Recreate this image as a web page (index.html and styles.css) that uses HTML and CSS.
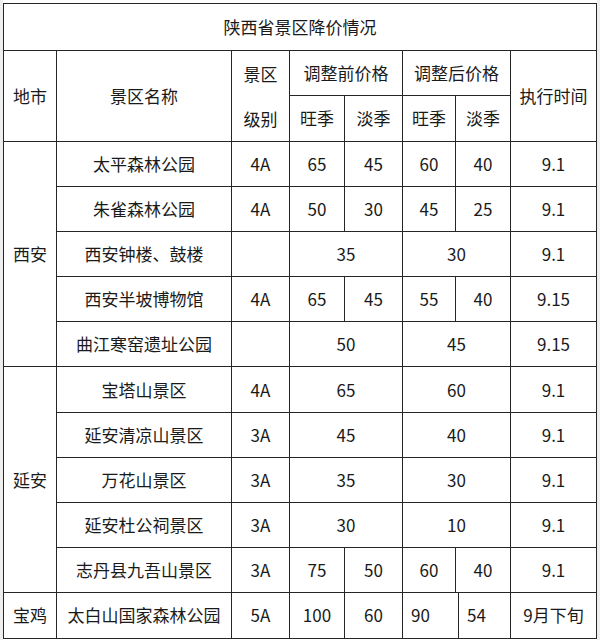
FILE: index.html
```html
<!DOCTYPE html>
<html lang="zh-CN">
<head>
<meta charset="utf-8">
<title>陕西省景区降价情况</title>
<link rel="stylesheet" href="styles.css">
</head>
<body>
<div class="sheet">
<table class="price-table">
  <colgroup>
    <col class="c-city"><col class="c-name"><col class="c-level">
    <col class="c-p1"><col class="c-p2"><col class="c-p3"><col class="c-gap"><col class="c-p4">
    <col class="c-date">
  </colgroup>
  <tr class="r-title"><td colspan="9">陕西省景区降价情况</td></tr>
  <tr class="r-head">
    <td rowspan="2">地市</td>
    <td rowspan="2">景区名称</td>
    <td rowspan="2" class="two-line">景区<br>级别</td>
    <td colspan="2">调整前价格</td>
    <td colspan="3">调整后价格</td>
    <td rowspan="2">执行时间</td>
  </tr>
  <tr class="r-head">
    <td>旺季</td><td>淡季</td><td>旺季</td><td colspan="2">淡季</td>
  </tr>
  <tr>
    <td rowspan="5">西安</td>
    <td>太平森林公园</td><td>4A</td><td>65</td><td>45</td><td>60</td><td colspan="2">40</td><td>9.1</td>
  </tr>
  <tr>
    <td>朱雀森林公园</td><td>4A</td><td>50</td><td>30</td><td>45</td><td colspan="2">25</td><td>9.1</td>
  </tr>
  <tr>
    <td>西安钟楼、鼓楼</td><td></td><td colspan="2">35</td><td colspan="3">30</td><td>9.1</td>
  </tr>
  <tr>
    <td>西安半坡博物馆</td><td>4A</td><td>65</td><td>45</td><td>55</td><td colspan="2">40</td><td>9.15</td>
  </tr>
  <tr>
    <td>曲江寒窑遗址公园</td><td></td><td colspan="2">50</td><td colspan="3">45</td><td>9.15</td>
  </tr>
  <tr>
    <td rowspan="5">延安</td>
    <td>宝塔山景区</td><td>4A</td><td colspan="2">65</td><td colspan="3">60</td><td>9.1</td>
  </tr>
  <tr>
    <td>延安清凉山景区</td><td>3A</td><td colspan="2">45</td><td colspan="3">40</td><td>9.1</td>
  </tr>
  <tr>
    <td>万花山景区</td><td>3A</td><td colspan="2">35</td><td colspan="3">30</td><td>9.1</td>
  </tr>
  <tr>
    <td>延安杜公祠景区</td><td>3A</td><td colspan="2">30</td><td colspan="3">10</td><td>9.1</td>
  </tr>
  <tr>
    <td>志丹县九吾山景区</td><td>3A</td><td>75</td><td>50</td><td>60</td><td colspan="2">40</td><td>9.1</td>
  </tr>
  <tr>
    <td>宝鸡</td>
    <td>太白山国家森林公园</td><td>5A</td><td>100</td><td>60</td><td colspan="2" class="left">90</td><td class="left">54</td><td>9月下旬</td>
  </tr>
</table>
</div>
</body>
</html>
```
FILE: styles.css
```css
html, body {
  margin: 0;
  padding: 0;
  background: #eeeeee;
}
.sheet {
  margin: 0 3px;
  padding-top: 3px;
  background: #ffffff;
  height: 637px;
}
.price-table {
  border-collapse: collapse;
  table-layout: fixed;
  width: 593px;
  font-family: "Noto Sans CJK SC", "Noto Sans", sans-serif;
  font-size: 17px;
  color: #1a1a1a;
  background: #ffffff;
}
.price-table td {
  border: 1px solid #262626;
  padding: 0;
  text-align: center;
  vertical-align: middle;
  white-space: nowrap;
  overflow: hidden;
  line-height: 20px;
}
.price-table td.left {
  text-align: left;
  padding-left: 8px;
}
.price-table td.two-line {
  line-height: 45px;
}
.c-city { width: 53px; }
.c-name { width: 175px; }
.c-level { width: 58px; }
.c-p1 { width: 55px; }
.c-p2 { width: 58px; }
.c-p3 { width: 53px; }
.c-gap { width: 3px; }
.c-p4 { width: 52px; }
.c-date { width: 86px; }
.r-title { height: 46.5px; }
.r-head { height: 45px; }
.price-table tr { height: 45.2px; }
.price-table tr.r-title { height: 46.5px; }
.price-table tr.r-head { height: 45px; }
```
